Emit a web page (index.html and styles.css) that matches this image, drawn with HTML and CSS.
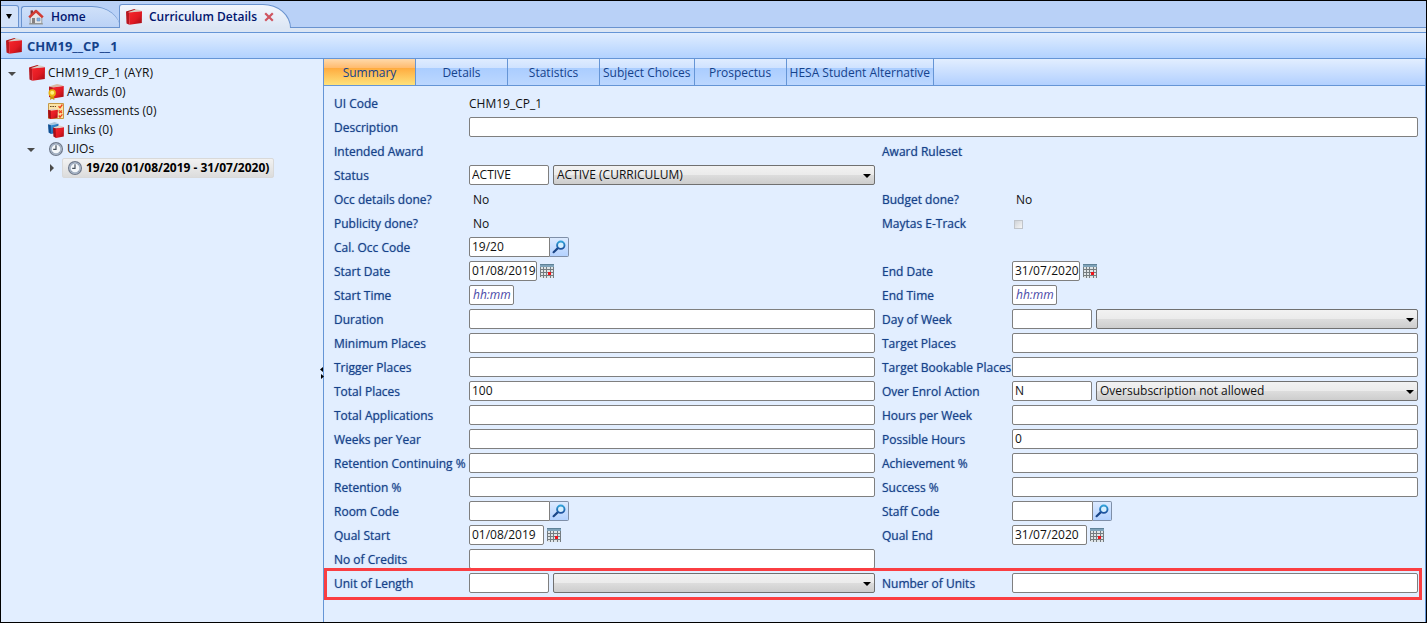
FILE: index.html
```html
<!DOCTYPE html>
<html lang="en">
<head>
<meta charset="utf-8">
<title>Curriculum Details</title>
<link rel="stylesheet" href="styles.css">
</head>
<body>
<svg class="defs" aria-hidden="true">
  <defs>
    <linearGradient id="red" x1="0" y1="0" x2="1" y2="1">
      <stop offset="0" stop-color="#f8262c"/><stop offset=".55" stop-color="#e01a22"/><stop offset="1" stop-color="#9c0a12"/>
    </linearGradient>
    <linearGradient id="blue" x1="0" y1="0" x2="1" y2="1">
      <stop offset="0" stop-color="#3f9be0"/><stop offset="1" stop-color="#0f4f94"/>
    </linearGradient>
    <linearGradient id="lens" x1="0" y1="0" x2="0" y2="1">
      <stop offset="0" stop-color="#2fa0d8"/><stop offset="1" stop-color="#1c4f9c"/>
    </linearGradient>
    <symbol id="book" viewBox="0 0 16 16">
      <path d="M0 2.6 8.5 0 16 1.4 3.6 4z" fill="#d8cfc4"/>
      <path d="M0 2.6 8.5 0 9.6 .4 1.6 3.2z" fill="#b01018"/>
      <path d="M0 2.6 3.4 3.6 3.4 15.8 .5 14.6z" fill="#b81820"/>
      <path d="M3 3.6 16 2.2 15.8 14 3.4 15.8z" fill="url(#red)"/>
    </symbol>
    <symbol id="award" viewBox="0 0 16 16">
      <path d="M1 2.6 9 0 15.6 1.4 5 3.4z" fill="#d8b9a4"/>
      <path d="M1 2.6 5 3.4 5 14 1 13z" fill="#b81820"/>
      <path d="M4.6 3.4 15.8 2 15.6 12.8 5 14.6z" fill="url(#red)"/>
      <path d="M2.6 11 2 16 4 14.8 6.4 16 6 11z" fill="#c8920a"/>
      <circle cx="4.2" cy="9" r="3.7" fill="#e8b410"/>
      <circle cx="4.2" cy="8.8" r="2" fill="#fff07a"/>
    </symbol>
    <symbol id="assess" viewBox="0 0 16 16">
      <path d="M.5 .5h15v15h-15z" fill="#fbe3a6" stroke="#c59a48"/>
      <path d="M2 3.5h1.6M4.4 3.5h1.6M6.8 3.5h1.2M9 8h1.5" stroke="#6a4a2a" stroke-width="1"/>
      <path d="M10.5 3.2 12 4.8 14.4 1.5M11 7.5l3 2.5M14 7.5 11 10M10.8 12.5l1.2 1.6 2.4-2.8" fill="none" stroke="#f0401c" stroke-width="1.3"/>
      <path d="M0 6.8 6 5.6 9.8 6.4 3 7.6z" fill="#e0d2c8"/>
      <path d="M0 6.8 3 7.6 3 16 .4 15z" fill="#a80e16"/>
      <path d="M2.8 7.8 9.8 6.8 9.6 14.8 3 16z" fill="url(#red)"/>
    </symbol>
    <symbol id="links" viewBox="0 0 16 16">
      <path d="M0 2.2 6.5 0 10.5 1.2 3 3.2z" fill="#a9c6dd"/>
      <path d="M0 2.2 3 3.2 3 12 .6 10.6z" fill="#0f4f94"/>
      <path d="M2.8 3.2 10.5 1.8 10.4 10.4 3 12z" fill="url(#blue)"/>
      <path d="M5 5.4 11.5 3.6 16 4.6 8 6.6z" fill="#e0d2c8"/>
      <path d="M5 5.4 8 6.4 8 16 5.4 14.4z" fill="#a80e16"/>
      <path d="M7.6 6.6 16 5.2 15.8 14.4 8 16z" fill="url(#red)"/>
    </symbol>
    <symbol id="clock" viewBox="0 0 16 16">
      <circle cx="8" cy="8" r="6.3" fill="#f4f7fa" stroke="#707a8c" stroke-width="1.5"/>
      <circle cx="8" cy="8" r="5.1" fill="none" stroke="#a3b1c4" stroke-width="1.5"/>
      <path d="M8 4.2V8.4H5.2" fill="none" stroke="#46505c" stroke-width="1.2"/>
      <path d="M11 5l.6-.6M11 11l.6.6M5 11l-.6.6" stroke="#7d8792" stroke-width=".8"/>
    </symbol>
    <symbol id="home" viewBox="0 0 16 16">
      <path d="M2.6 1.4h2.4v4H2.6z" fill="#7c3434"/>
      <path d="M2.2 8 8 3 13.8 8v6.6H2.2z" fill="#e4e6e8" stroke="#8d8f92" stroke-width=".8"/>
      <path d="M4 9h3v5.4H4z" fill="#858080"/>
      <path d="M9 9h3v3H9z" fill="#7cb2ea" stroke="#6f8fb5" stroke-width=".6"/>
      <path d="M1.2 8.4 8 2 14.8 8.4" fill="none" stroke="#d23c34" stroke-width="2.6" stroke-linejoin="round"/>
      <path d="M1 14.9h14" stroke="#8c8c86" stroke-width="1"/>
    </symbol>
    <symbol id="find" viewBox="0 0 14 14">
      <path d="M6.4 7.6 1.6 12.2" stroke="#1b4688" stroke-width="2.2" stroke-linecap="round"/>
      <circle cx="8.8" cy="5.2" r="3.7" fill="#d6efff" stroke="url(#lens)" stroke-width="1.9"/>
    </symbol>
    <symbol id="cal" viewBox="0 0 14 14">
      <path d="M0 0h14v14H0z" fill="#dfe4e6"/>
      <path d="M0 0h14v3H0z" fill="#7fa3ba"/>
      <path d="M0 .5h14" stroke="#5f8298"/>
      <path d="M.5 3v10M3.5 3v11M6.5 3v11M10.5 3v11M13.5 3v11M0 5.5h14M0 8.5h14M0 11.5h14" stroke="#757c80" stroke-width="1"/>
      <path d="M8 8h3v3H8z" fill="#f0141c"/>
    </symbol>
  </defs>
</svg>

<nav class="doc-tabs">
  <button class="tab-menu" aria-label="Tab list"><span class="tri"></span></button>
  <button class="doc-tab home"><svg class="icon"><use href="#home"/></svg>Home</button>
  <div class="doc-tab current"><svg class="icon"><use href="#book"/></svg><span>Curriculum Details</span>
    <button class="close" aria-label="Close tab"><svg viewBox="0 0 10 10"><path d="M1.2 1.2 8.8 8.8M8.8 1.2 1.2 8.8" stroke="#cf5560" stroke-width="2.2"/></svg></button>
  </div>
</nav>

<header class="title-bar"><svg class="icon"><use href="#book"/></svg><h1>CHM19__CP__1</h1></header>

<div class="body">
  <aside class="sidebar">
    <ul class="tree">
      <li class="node level-0"><button class="twist open" aria-label="Collapse"></button><span class="item"><svg class="icon"><use href="#book"/></svg>CHM19_CP_1 (AYR)</span></li>
      <li class="node level-1"><span class="twist"></span><span class="item"><svg class="icon"><use href="#award"/></svg>Awards (0)</span></li>
      <li class="node level-1"><span class="twist"></span><span class="item"><svg class="icon"><use href="#assess"/></svg>Assessments (0)</span></li>
      <li class="node level-1"><span class="twist"></span><span class="item"><svg class="icon"><use href="#links"/></svg>Links (0)</span></li>
      <li class="node level-1"><button class="twist open" aria-label="Collapse"></button><span class="item"><svg class="icon"><use href="#clock"/></svg>UIOs</span></li>
      <li class="node level-2"><button class="twist shut" aria-label="Expand"></button><span class="item selected"><svg class="icon"><use href="#clock"/></svg>19/20 (01/08/2019 - 31/07/2020)</span></li>
    </ul>
    <svg class="splitter" viewBox="0 0 4 12"><path d="M3 0v5L0 2.5zM1 7v5l3-2.5z"/></svg>
  </aside>

  <main class="content">
    <div class="page-tabs" role="tablist">
      <button role="tab" aria-selected="true" class="active">Summary</button>
      <button role="tab">Details</button>
      <button role="tab">Statistics</button>
      <button role="tab">Subject Choices</button>
      <button role="tab">Prospectus</button>
      <button role="tab">HESA Student Alternative</button>
    </div>

    <form class="form">
      <div class="row"><span class="label">UI Code</span><span class="value flush">CHM19_CP_1</span></div>
      <div class="row"><label for="desc">Description</label><div class="field wide"><input id="desc" type="text"></div></div>
      <div class="row"><span class="label">Intended Award</span><div></div><span class="label">Award Ruleset</span></div>
      <div class="row"><label for="status">Status</label><div class="field"><input id="status" class="code" type="text" value="ACTIVE"><span class="select"><select aria-label="Status description"><option>ACTIVE (CURRICULUM)</option></select></span></div></div>
      <div class="row"><span class="label">Occ details done?</span><span class="value">No</span><span class="label">Budget done?</span><span class="value">No</span></div>
      <div class="row"><span class="label">Publicity done?</span><span class="value">No</span><label for="maytas">Maytas E-Track</label><div class="tick"><input id="maytas" type="checkbox" disabled></div></div>
      <div class="row"><label for="occ">Cal. Occ Code</label><div class="field lookup"><input id="occ" type="text" value="19/20"><button type="button" aria-label="Find occurrence"><svg><use href="#find"/></svg></button></div></div>
      <div class="row">
        <label for="sd">Start Date</label><div class="field"><input id="sd" class="date" type="text" value="01/08/2019"><button type="button" class="cal" aria-label="Pick start date"><svg><use href="#cal"/></svg></button></div>
        <label for="ed">End Date</label><div class="field"><input id="ed" class="date" type="text" value="31/07/2020"><button type="button" class="cal" aria-label="Pick end date"><svg><use href="#cal"/></svg></button></div>
      </div>
      <div class="row"><label for="st">Start Time</label><div class="field"><input id="st" class="time" type="text" placeholder="hh:mm"></div><label for="et">End Time</label><div class="field"><input id="et" class="time" type="text" placeholder="hh:mm"></div></div>
      <div class="row"><label for="dur">Duration</label><div class="field"><input id="dur" type="text"></div><label for="dow">Day of Week</label><div class="field"><input id="dow" class="code" type="text"><span class="select"><select aria-label="Day of week description"><option></option></select></span></div></div>
      <div class="row"><label for="minp">Minimum Places</label><div class="field"><input id="minp" type="text"></div><label for="tarp">Target Places</label><div class="field"><input id="tarp" type="text"></div></div>
      <div class="row"><label for="trig">Trigger Places</label><div class="field"><input id="trig" type="text"></div><label for="tbp">Target Bookable Places</label><div class="field"><input id="tbp" type="text"></div></div>
      <div class="row"><label for="tot">Total Places</label><div class="field"><input id="tot" type="text" value="100"></div><label for="over">Over Enrol Action</label><div class="field"><input id="over" class="code" type="text" value="N"><span class="select"><select aria-label="Over enrol action description"><option>Oversubscription not allowed</option></select></span></div></div>
      <div class="row"><label for="apps">Total Applications</label><div class="field"><input id="apps" type="text"></div><label for="hpw">Hours per Week</label><div class="field"><input id="hpw" type="text"></div></div>
      <div class="row"><label for="wpy">Weeks per Year</label><div class="field"><input id="wpy" type="text"></div><label for="poss">Possible Hours</label><div class="field"><input id="poss" type="text" value="0"></div></div>
      <div class="row"><label for="retc">Retention Continuing %</label><div class="field"><input id="retc" type="text"></div><label for="ach">Achievement %</label><div class="field"><input id="ach" type="text"></div></div>
      <div class="row"><label for="ret">Retention %</label><div class="field"><input id="ret" type="text"></div><label for="suc">Success %</label><div class="field"><input id="suc" type="text"></div></div>
      <div class="row"><label for="room">Room Code</label><div class="field lookup"><input id="room" type="text"><button type="button" aria-label="Find room"><svg><use href="#find"/></svg></button></div><label for="staff">Staff Code</label><div class="field lookup"><input id="staff" type="text"><button type="button" aria-label="Find staff"><svg><use href="#find"/></svg></button></div></div>
      <div class="row">
        <label for="qs">Qual Start</label><div class="field"><input id="qs" class="date long" type="text" value="01/08/2019"><button type="button" class="cal" aria-label="Pick qualification start"><svg><use href="#cal"/></svg></button></div>
        <label for="qe">Qual End</label><div class="field"><input id="qe" class="date long" type="text" value="31/07/2020"><button type="button" class="cal" aria-label="Pick qualification end"><svg><use href="#cal"/></svg></button></div>
      </div>
      <div class="row"><label for="cred">No of Credits</label><div class="field"><input id="cred" type="text"></div></div>
      <div class="row marked"><label for="uol">Unit of Length</label><div class="field"><input id="uol" class="code" type="text"><span class="select"><select aria-label="Unit of length description"><option></option></select></span></div><label for="nou">Number of Units</label><div class="field"><input id="nou" type="text"></div></div>
    </form>
  </main>
</div>
</body>
</html>
```

FILE: styles.css
```css
* { box-sizing: border-box; }

body {
  margin: 0;
  min-height: 100vh;
  display: flex;
  flex-direction: column;
  border: 1px solid #000;
  background: #e2eeff;
  color: #111;
  font: 12px/18px "Open Sans", "Noto Sans", sans-serif;
}

button, input, select { font: inherit; color: inherit; }
button { margin: 0; padding: 0; border: 0; background: none; }
.defs { position: absolute; width: 0; height: 0; }
.icon { width: 16px; height: 16px; flex: none; }

/* Document tabs */
.doc-tabs {
  display: flex;
  align-items: flex-end;
  height: 31px;
  padding-bottom: 4px;
  background: linear-gradient(#b9d1f7 0 26px, #6a93cf 26px 27px, #dce6f4 27px);
}
.tab-menu {
  width: 18px;
  height: 23px;
  margin-right: 2px;
  padding: 0 2px 4px 0;
  border: 1px solid #6a93cf;
  border-left: 0;
  border-radius: 0 3px 0 0;
  background: #d3e2f9;
}
.tri {
  display: inline-block;
  border: 3px solid transparent;
  border-top: 5px solid #000;
  border-bottom: 0;
}
.doc-tab {
  display: flex;
  align-items: center;
  gap: 7px;
  border: 1px solid #6a93cf;
  color: #00156e;
  font-weight: 600;
}
.doc-tab.home {
  width: 99px;
  height: 22px;
  padding-left: 6px;
  margin-right: -1px;
  border-right: 0;
  border-radius: 3px 28px 0 0 / 3px 22px 0 0;
  background: linear-gradient(#cfe0f9, #bbd2f6);
}
.doc-tab.current {
  height: 24px;
  padding: 0 16px 0 6px;
  border-bottom: 0;
  border-radius: 3px 28px 0 0 / 3px 24px 0 0;
  background: linear-gradient(#f2f6fd, #dce6f4);
}
.close { width: 10px; height: 10px; display: flex; }
.close svg { width: 10px; height: 10px; }

.title-bar {
  display: flex;
  align-items: center;
  gap: 5px;
  height: 27px;
  padding-left: 5px;
  border: 1px solid #6595d6;
  border-width: 1px 0;
  background: linear-gradient(#e0edff, #b2d2ff);
}
.title-bar h1 { margin: 0; font-size: 13px; line-height: 18px; color: #15428b; }

.body { flex: 1; display: flex; }

/* Navigation tree */
.sidebar {
  position: relative;
  width: 323px;
  flex: none;
  border-right: 1px solid #6595d6;
}
.tree { margin: 0; padding: 4px 0 0 4px; list-style: none; }
.node { display: flex; align-items: center; height: 19px; }
.level-1 { padding-left: 19px; }
.level-2 { padding-left: 38px; }
.twist { width: 14px; height: 16px; flex: none; display: flex; align-items: center; justify-content: center; margin-right: 5px; }
.twist::before { content: ""; border: 4px solid transparent; }
.twist.open::before { border-top: 4px solid #4a4a4a; border-bottom: 0; margin-top: 3px; }
.twist.shut::before { border-left: 4px solid #4a4a4a; border-right: 0; margin-left: 3px; }
.item { display: flex; align-items: center; gap: 3px; padding: 0 2px 0 5px; }
.item.selected {
  border: 1px solid #d9d9d9;
  border-radius: 2px;
  padding: 0 4px;
  background: linear-gradient(#f2f2f2, #dcdcdc);
  font-weight: 700;
  color: #000;
}
.splitter { position: absolute; right: -1px; top: calc(50% + 26px); width: 4px; height: 12px; }

/* Page tabs */
.content { flex: 1; min-width: 0; border-right: 1px solid #6595d6; }
.page-tabs {
  display: flex;
  height: 27px;
  border-bottom: 1px solid #6595d6;
  background: linear-gradient(#e2eeff, #b2d0ff);
}
.page-tabs button {
  min-width: 92px;
  padding: 2px 3px 0;
  border-right: 1px solid #6595d6;
  background: linear-gradient(#dfecff 0, #cfe2ff 9px, #aacdff 9px, #bcd7ff);
  color: #15428b;
}
.page-tabs .active { background: linear-gradient(#ffd9aa 0, #ffbb6e 9px, #ffab3f 9px, #fee17a); }

/* Form */
.form { padding: 6px 7px 23px 10px; }
.row {
  position: relative;
  display: grid;
  grid-template-columns: 135px minmax(0, 1fr) 137px minmax(0, 1fr);
  height: 24px;
}
.row label, .label {
  color: #15428b;
  font-weight: 500;
  line-height: 24px;
  white-space: nowrap;
  text-shadow: 0 0 1px rgba(21, 66, 139, .6);
}
.row > :nth-child(3) { padding-left: 7px; }
.value { padding-left: 4px; line-height: 24px; }
.value.flush { padding-left: 0; }
.field { display: flex; gap: 3px; height: 20px; margin-top: 1px; }
.field.wide { grid-column: 2 / -1; }
.field input {
  flex: 1;
  min-width: 0;
  height: 20px;
  padding: 0 2px 1px;
  border: 1px solid #7f7f7f;
  border-radius: 2px;
  background: #fff;
}
.field .code { flex: 0 0 80px; margin-right: 1px; }
.field .date { flex: 0 0 68px; padding-right: 0; }
.field .date.long { flex-basis: 75px; }
.field .time { flex: 0 0 45px; padding-left: 3px; }
.field input::placeholder { color: #4a48a8; font-style: italic; opacity: 1; }

.lookup { gap: 0; }
.field.lookup input { flex: 0 0 81px; border-radius: 2px 0 0 2px; }
.lookup button {
  display: flex;
  align-items: center;
  justify-content: center;
  width: 19px;
  border: 1px solid #7f8fa8;
  border-left: 0;
  border-radius: 0 2px 2px 0;
  background: linear-gradient(#dceaff, #b4d2ff);
}
.lookup svg { width: 14px; height: 14px; }
.cal { display: flex; align-items: center; }
.cal svg { width: 14px; height: 14px; }

.select { position: relative; flex: 1; min-width: 0; }
.select select {
  display: block;
  width: 100%;
  height: 20px;
  padding: 0 16px 0 3px;
  border: 1px solid #707070;
  border-radius: 2px;
  appearance: none;
  background: linear-gradient(#f2f2f2, #ebebeb 50%, #dddddd 50%, #cdcdcd);
}
.select::after {
  content: "";
  position: absolute;
  right: 4px;
  top: 9px;
  border: 4px solid transparent;
  border-top: 4px solid #000;
  border-bottom: 0;
  pointer-events: none;
}
.tick { display: flex; align-items: center; padding-left: 2px; }
.tick input {
  width: 9px;
  height: 9px;
  margin: 0;
  appearance: none;
  border: 1px solid #c0c4ca;
  background: linear-gradient(135deg, #cfd3d8, #f6f6f6);
}
.marked::after {
  content: "";
  position: absolute;
  inset: -4px -4px -4px -10px;
  border: 3px solid #fa3e42;
  pointer-events: none;
}
```
